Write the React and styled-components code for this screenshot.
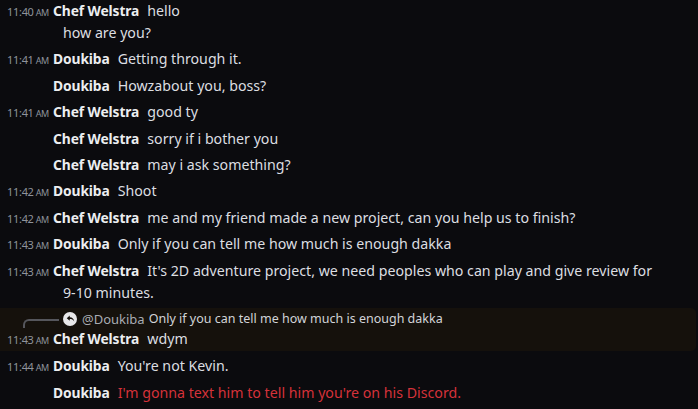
import React from "react";
import styled, { createGlobalStyle } from "styled-components";

const Global = createGlobalStyle`
  html, body { margin: 0; padding: 0; background: #0b0b0e; }
  body { font-family: "Noto Sans", "Open Sans", sans-serif; }
`;

const Page = styled.div`
  width: 698px;
  height: 409px;
  overflow: hidden;
  background: #0b0b0e;
  display: flex;
  flex-direction: column;
  gap: 4.4px;
`;

const Message = styled.div`
  display: flex;
  flex-direction: column;
  padding: ${(p) => (p.$highlight ? "2px 0 1px" : "0")};
  background: ${(p) => (p.$highlight ? "#15110c" : "transparent")};
  border-radius: 0 5px 5px 0;
  margin-right: 2px;
`;

const Line = styled.div`
  display: flex;
  align-items: baseline;
  height: 22px;
  line-height: 22px;
  white-space: nowrap;
`;

const Stamp = styled.span`
  width: 46px;
  flex: none;
  padding-left: 7px;
  font-size: 11px;
  color: #8e939b;
  letter-spacing: -0.3px;
  & small {
    font-size: 9px;
    margin-left: 2px;
  }
`;

const Name = styled.span`
  font-weight: 700;
  font-size: 13.8px;
  color: #eceef0;
  margin-right: 8px;
  letter-spacing: -0.1px;
`;

const Text = styled.span`
  font-size: 14.2px;
  color: ${(p) => (p.$red ? "#d5323a" : "#dcdee1")};
`;

const Cont = styled.div`
  padding-left: 63px;
  height: 22px;
  line-height: 22px;
  font-size: 14.2px;
  color: #dcdee1;
  white-space: nowrap;
`;

const ReplyLine = styled.div`
  display: flex;
  align-items: center;
  height: 18px;
  white-space: nowrap;
`;

const Connector = styled.div`
  width: 36px;
  height: 9px;
  margin-left: 23px;
  margin-top: 10px;
  margin-right: 4px;
  border-left: 2px solid #55565c;
  border-top: 2px solid #55565c;
  border-top-left-radius: 6px;
  box-sizing: border-box;
  flex: none;
`;

const ReplyIcon = styled.div`
  width: 14px;
  height: 14px;
  border-radius: 50%;
  background: #e8e8ea;
  display: flex;
  align-items: center;
  justify-content: center;
  margin-right: 5px;
  flex: none;
`;

const ReplyName = styled.span`
  font-size: 13px;
  color: #a9acb3;
  margin-right: 4px;
`;

const ReplyText = styled.span`
  font-size: 12.5px;
  color: #d2d4d8;
`;

const Row = ({ t, name, children, red }) => (
  <Line>
    <Stamp>{t ? <>{t}<small>AM</small></> : null}</Stamp>
    <Name>{name}</Name>
    <Text $red={red}>{children}</Text>
  </Line>
);

export default function App() {
  return (
    <>
      <Global />
      <Page>
        <Message>
          <Row t="11:40" name="Chef Welstra">hello</Row>
          <Cont>how are you?</Cont>
        </Message>
        <Message>
          <Row t="11:41" name="Doukiba">Getting through it.</Row>
        </Message>
        <Message>
          <Row name="Doukiba">Howzabout you, boss?</Row>
        </Message>
        <Message>
          <Row t="11:41" name="Chef Welstra">good ty</Row>
        </Message>
        <Message>
          <Row name="Chef Welstra">sorry if i bother you</Row>
        </Message>
        <Message>
          <Row name="Chef Welstra">may i ask something?</Row>
        </Message>
        <Message>
          <Row t="11:42" name="Doukiba">Shoot</Row>
        </Message>
        <Message>
          <Row t="11:42" name="Chef Welstra">
            me and my friend made a new project, can you help us to finish?
          </Row>
        </Message>
        <Message>
          <Row t="11:43" name="Doukiba">
            Only if you can tell me how much is enough dakka
          </Row>
        </Message>
        <Message>
          <Row t="11:43" name="Chef Welstra">
            It's 2D adventure project, we need peoples who can play and give review for
          </Row>
          <Cont>9-10 minutes.</Cont>
        </Message>
        <Message $highlight>
          <ReplyLine>
            <Connector />
            <ReplyIcon>
              <svg width="9" height="9" viewBox="0 0 24 24">
                <path
                  d="M10 4 L2 11 L10 18 V13.5 C15 13.5 19 15 22 20 C21 13 17 8.5 10 8.5 Z"
                  fill="#15110c"
                />
              </svg>
            </ReplyIcon>
            <ReplyName>@Doukiba</ReplyName>
            <ReplyText>Only if you can tell me how much is enough dakka</ReplyText>
          </ReplyLine>
          <Row t="11:43" name="Chef Welstra">wdym</Row>
        </Message>
        <Message>
          <Row t="11:44" name="Doukiba">You're not Kevin.</Row>
        </Message>
        <Message>
          <Row name="Doukiba" red>
            I'm gonna text him to tell him you're on his Discord.
          </Row>
        </Message>
      </Page>
    </>
  );
}
